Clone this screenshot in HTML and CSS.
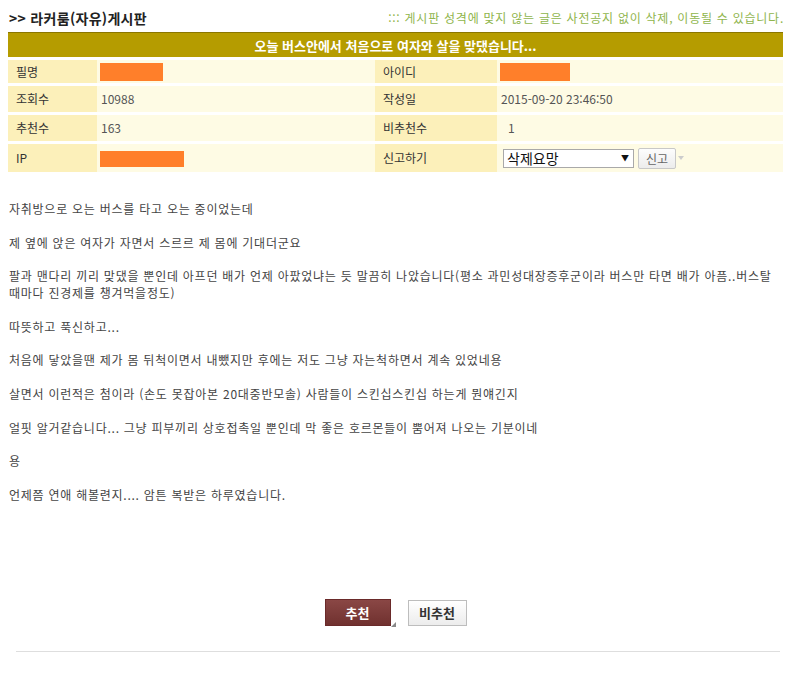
FILE: index.html
```html
<!DOCTYPE html>
<html lang="ko">
<head>
<meta charset="utf-8">
<title>라커룸(자유)게시판</title>
<link rel="stylesheet" href="styles.css">
</head>
<body>
<div class="board-head">
  <h1 class="board-title">&gt;&gt; 라커룸(자유)게시판</h1>
  <p class="board-notice">::: 게시판 성격에 맞지 않는 글은 사전공지 없이 삭제, 이동될 수 있습니다.</p>
</div>

<table class="post-info">
  <colgroup>
    <col class="c1"><col class="c2"><col class="c3"><col class="c4">
  </colgroup>
  <thead>
    <tr class="row-title"><th colspan="4">오늘 버스안에서 처음으로 여자와 살을 맞댔습니다...</th></tr>
  </thead>
  <tbody>
    <tr class="r1">
      <td class="lbl">필명</td>
      <td class="val"><span class="redact w63"></span></td>
      <td class="lbl">아이디</td>
      <td class="val"><span class="redact w70"></span></td>
    </tr>
    <tr class="r2">
      <td class="lbl">조회수</td>
      <td class="val">10988</td>
      <td class="lbl">작성일</td>
      <td class="val">2015-09-20 23:46:50</td>
    </tr>
    <tr class="r3">
      <td class="lbl">추천수</td>
      <td class="val">163</td>
      <td class="lbl">비추천수</td>
      <td class="val"><span class="ind">1</span></td>
    </tr>
    <tr class="r4">
      <td class="lbl">IP</td>
      <td class="val"><span class="redact w84"></span></td>
      <td class="lbl">신고하기</td>
      <td class="val">
        <div class="report">
          <span class="select-wrap">
            <select class="report-select"><option>삭제요망</option></select>
            <span class="select-arrow">▼</span>
          </span>
          <button class="report-btn" type="button">신고</button>
          <span class="tick"></span>
        </div>
      </td>
    </tr>
  </tbody>
</table>

<div class="article">
  <p>자취방으로 오는 버스를 타고 오는 중이었는데</p>
  <p>제 옆에 앉은 여자가 자면서 스르르 제 몸에 기대더군요</p>
  <p>팔과 맨다리 끼리 맞댔을 뿐인데 아프던 배가 언제 아팠었냐는 듯 말끔히 나았습니다(평소 과민성대장증후군이라 버스만 타면 배가 아픔..버스탈 때마다 진경제를 챙겨먹을정도)</p>
  <p>따뜻하고 푹신하고...</p>
  <p>처음에 닿았을땐 제가 몸 뒤척이면서 내뺐지만 후에는 저도 그냥 자는척하면서 계속 있었네용</p>
  <p>살면서 이런적은 첨이라 (손도 못잡아본 20대중반모솔) 사람들이 스킨십스킨십 하는게 뭔얘긴지</p>
  <p>얼핏 알거같습니다... 그냥 피부끼리 상호접촉일 뿐인데 막 좋은 호르몬들이 뿜어져 나오는 기분이네</p>
  <p>용</p>
  <p>언제쯤 연애 해볼련지.... 암튼 복받은 하루였습니다.</p>
</div>

<div class="vote">
  <button class="btn-up" type="button">추천</button>
  <button class="btn-down" type="button">비추천</button>
</div>

<hr class="foot-line">
</body>
</html>
```

FILE: styles.css
```css
html, body {
  background: #ffffff;
}
body {
  margin: 8px 4px 0 8px;
  font-family: "Noto Sans CJK KR", "Noto Sans", sans-serif;
  font-size: 12px;
  color: #333;
}

.board-head {
  display: flex;
  justify-content: space-between;
  align-items: flex-start;
  height: 24px;
}
.board-title {
  margin: 0;
  padding-left: 1px;
  font-size: 14px;
  font-weight: bold;
  line-height: 20px;
  letter-spacing: 0.3px;
  color: #222;
}
.board-notice {
  margin: 0;
  font-size: 12px;
  line-height: 20px;
  letter-spacing: 0.75px;
  margin-right: -1px;
  color: #8fb54c;
}

.post-info {
  width: 775px;
  border-collapse: separate;
  border-spacing: 0 3px;
  margin-top: -3px;
  table-layout: fixed;
}
.c1 { width: 89px; }
.c2 { width: 278px; }
.c3 { width: 122px; }
.c4 { width: 286px; }

.row-title th {
  height: 24px;
  padding: 0;
  background: #b59c00;
  border-top: 1px solid #8a7600;
  color: #fff;
  font-size: 13px;
  font-weight: bold;
  text-align: center;
  vertical-align: middle;
}

.post-info td {
  padding: 0;
  vertical-align: middle;
  line-height: 16px;
}
.post-info td.lbl {
  background: #fcf0ba;
  padding-left: 8px;
  color: #333;
}
.post-info td.val {
  background: #fefbe4;
  padding-left: 4px;
  color: #555;
}
.r1 td { height: 23px; }
.r2 td { height: 26px; }
.r3 td { height: 26px; }
.r4 td { height: 28px; }

.redact {
  display: inline-block;
  height: 18px;
  background: #ff7f2a;
  vertical-align: middle;
  margin-left: -1px;
}
.w63 { width: 63px; }
.w70 { width: 70px; }
.w84 { width: 84px; height: 16px; }
.ind { padding-left: 7px; }

.report {
  display: flex;
  align-items: center;
  padding-left: 2px;
}
.select-wrap {
  position: relative;
  display: inline-block;
}
.report-select {
  appearance: none;
  -webkit-appearance: none;
  width: 131px;
  height: 19px;
  margin: 0;
  padding: 0 0 0 3px;
  border: 1px solid #a9a9a9;
  border-radius: 0;
  background: #fff;
  font-family: "Noto Sans CJK KR", sans-serif;
  font-size: 14px;
  line-height: 17px;
  color: #111;
}
.select-arrow {
  position: absolute;
  right: 5px;
  top: 3px;
  font-size: 8px;
  line-height: 12px;
  color: #111;
  pointer-events: none;
}
.report-btn {
  margin-left: 4px;
  width: 38px;
  height: 21px;
  padding: 0;
  border: 1px solid #c8c8c8;
  border-radius: 2px;
  background: linear-gradient(#fdfdfd, #ececec);
  font-family: "Noto Sans CJK KR", sans-serif;
  font-size: 12px;
  color: #666;
}
.tick {
  width: 0;
  height: 0;
  margin-left: 2px;
  border-left: 3px solid transparent;
  border-right: 3px solid transparent;
  border-top: 4px solid #ccc;
}

.article {
  padding-top: 25px;
  color: #444;
}
.article p {
  margin: 0 0 16.6px;
  line-height: 17px;
  font-size: 12px;
  letter-spacing: 0.75px;
  word-break: keep-all;
  padding-left: 1px;
}

.vote {
  display: flex;
  justify-content: center;
  align-items: flex-start;
  gap: 17px;
  margin-top: 96px;
  padding-left: 0;
}
.btn-up {
  position: relative;
  width: 66px;
  height: 27px;
  padding: 0;
  border: 1px solid #6a2a2a;
  background: linear-gradient(#8a4745, #70312f);
  color: #fff;
  font-family: "Noto Sans CJK KR", sans-serif;
  font-size: 13px;
  font-weight: bold;
}
.btn-up::after {
  content: "";
  position: absolute;
  right: -6px;
  bottom: -2px;
  width: 0;
  height: 0;
  border-left: 5px solid transparent;
  border-bottom: 5px solid #888;
}
.btn-down {
  width: 59px;
  height: 26px;
  margin-top: 1px;
  padding: 0;
  border: 1px solid #bdbdbd;
  background: linear-gradient(#ffffff, #ececec);
  color: #333;
  font-family: "Noto Sans CJK KR", sans-serif;
  font-size: 13px;
  font-weight: bold;
}

.foot-line {
  margin: 25px 3px 0 8px;
  border: 0;
  border-top: 1px solid #dedede;
  height: 0;
}
```
